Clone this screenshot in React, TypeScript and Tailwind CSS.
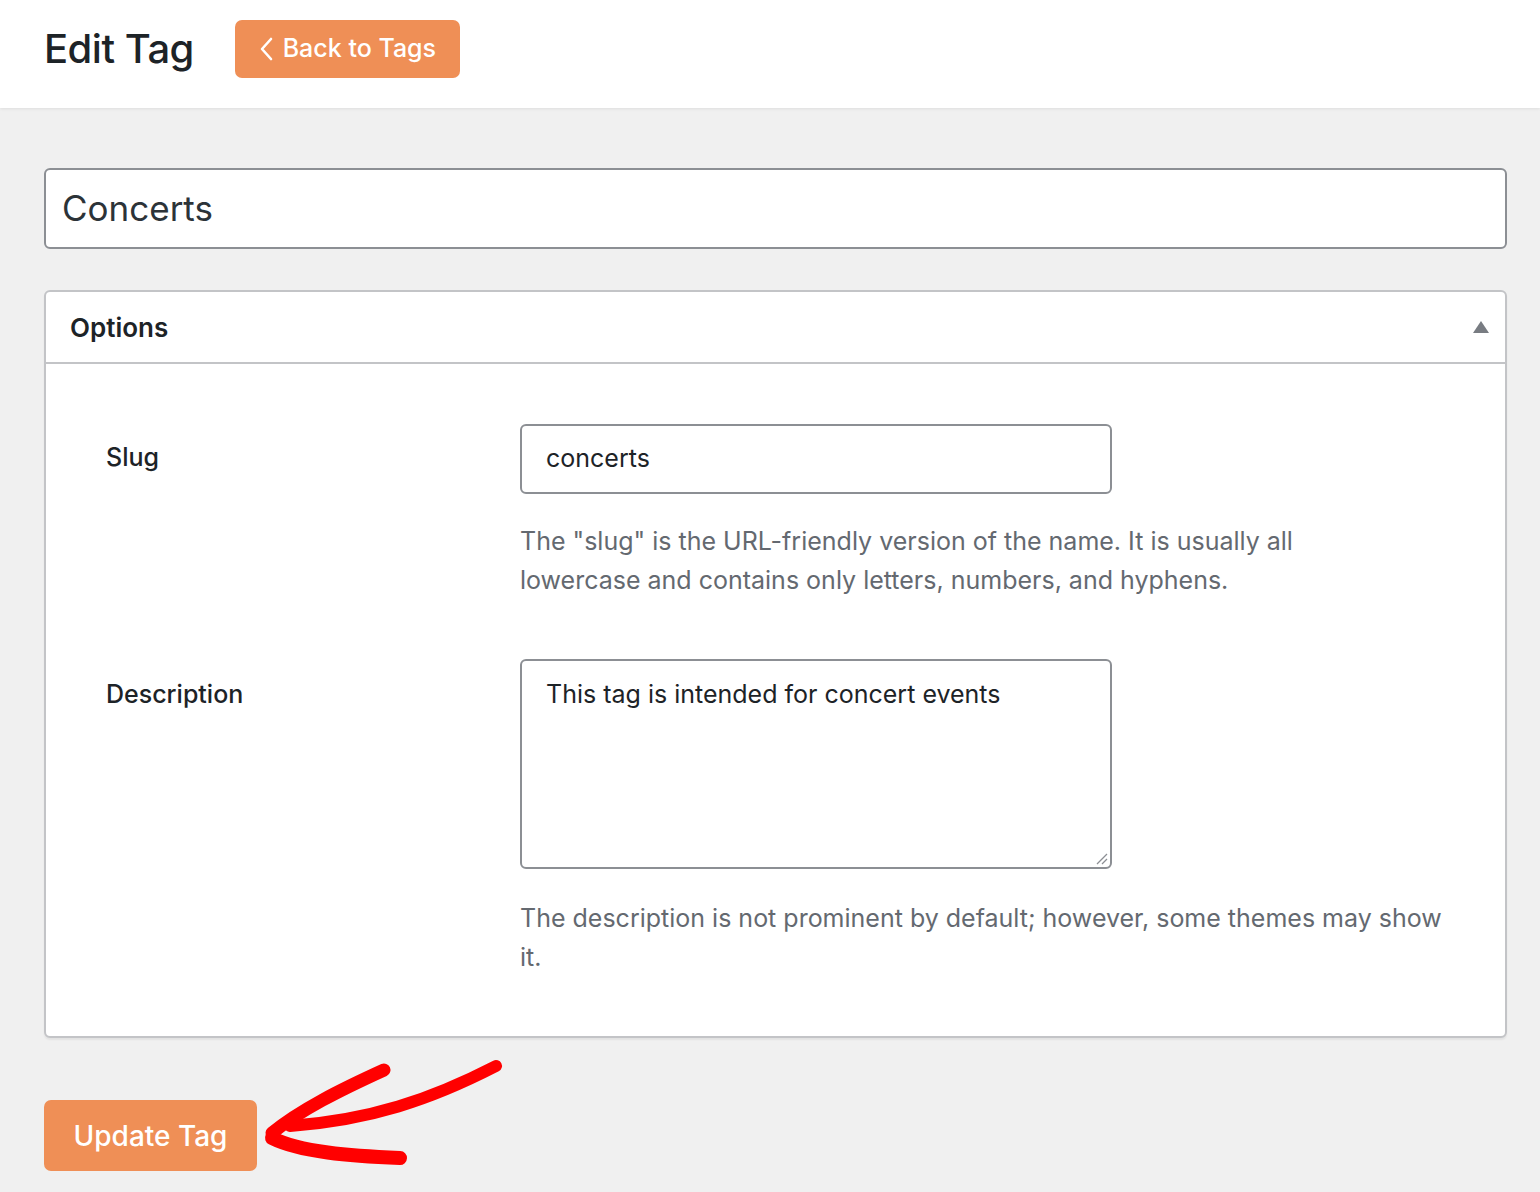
export default function App() {
  const f = { fontFamily: "Inter, 'Noto Sans', sans-serif" };
  return (
    <div style={f} className="w-[1540px] h-[1192px] bg-[#f0f0f0] relative overflow-hidden">
      <div className="h-[108px] bg-white flex items-start pt-[20px] pl-[44px] gap-[41px] shadow-[0_1px_3px_rgba(0,0,0,0.08)]">
        <h1 className="text-[40px] h-[58px] flex items-center font-medium text-[#1d2327] tracking-[-0.5px] leading-none">Edit Tag</h1>
        <div className="w-[225px] h-[58px] rounded-[7px] bg-[#ef8f56] text-white flex items-center justify-center gap-[8px] text-[25px] font-medium">
          <svg width="16" height="26" viewBox="0 0 16 26" fill="none" stroke="white" strokeWidth="2.6" strokeLinecap="round" strokeLinejoin="round"><path d="M12 3 L3 13 L12 23" /></svg>
          <span>Back to Tags</span>
        </div>
      </div>
      <div className="px-[44px] pt-[60px] pr-[33px]">
        <div className="h-[81px] bg-white border-2 border-[#8c8f94] rounded-[6px] flex items-center pl-[16px] text-[35px] text-[#2c3338]">Concerts</div>
        <div className="mt-[41px] bg-white border-2 border-[#c3c4c7] rounded-[6px] h-[748px] shadow-[0_2px_2px_rgba(0,0,0,0.06)]">
          <div className="h-[72px] border-b-2 border-[#c3c4c7] flex items-center justify-between pl-[24px] pr-[16px]">
            <span className="text-[26px] font-semibold text-[#1d2327]">Options</span>
            <svg width="16" height="12" viewBox="0 0 16 12"><path d="M8 0 L16 12 L0 12 Z" fill="#787c82" /></svg>
          </div>
          <div className="grid grid-cols-[414px_1fr] pl-[60px] pt-[60px] text-[25px]">
            <div className="pt-[15px] font-medium text-[#1d2327]">Slug</div>
            <div>
              <div className="w-[592px] h-[70px] border-2 border-[#8c8f94] rounded-[6px] flex items-center pl-[24px] text-[#1d2327]">concerts</div>
              <p className="mt-[28px] text-[#646970] leading-[39px] w-[900px]">The "slug" is the URL-friendly version of the name. It is usually all lowercase and contains only letters, numbers, and hyphens.</p>
            </div>
            <div className="pt-[17px] font-medium text-[#1d2327] mt-[59px]">Description</div>
            <div className="mt-[59px]">
              <div className="w-[592px] h-[210px] border-2 border-[#8c8f94] rounded-[6px] pl-[24px] pt-[15px] text-[#1d2327] relative">
                This tag is intended for concert events
                <svg className="absolute right-[2px] bottom-[2px]" width="14" height="14" viewBox="0 0 14 14" stroke="#8c8f94" strokeWidth="1.3"><path d="M13 3 L3 13 M13 8 L8 13" /></svg>
              </div>
              <p className="mt-[30px] text-[#646970] leading-[39px] w-[930px]">The description is not prominent by default; however, some themes may show it.</p>
            </div>
          </div>
        </div>
        <div className="mt-[62px] w-[213px] h-[71px] rounded-[7px] bg-[#ef8f56] text-white flex items-center justify-center text-[28px] font-medium">Update Tag</div>
      </div>
      <svg className="absolute left-0 top-0 pointer-events-none" width="1540" height="1192" viewBox="0 0 1540 1192" fill="none" stroke="#ff0000" strokeLinecap="round" strokeLinejoin="round">
        <path d="M384 1070 C340 1090 300 1110 272 1133" strokeWidth="13" />
        <path d="M496 1066 C430 1100 370 1120 290 1126" strokeWidth="12" />
        <path d="M272 1138 C300 1152 350 1156 400 1158" strokeWidth="14" />
      </svg>
    </div>
  );
}
